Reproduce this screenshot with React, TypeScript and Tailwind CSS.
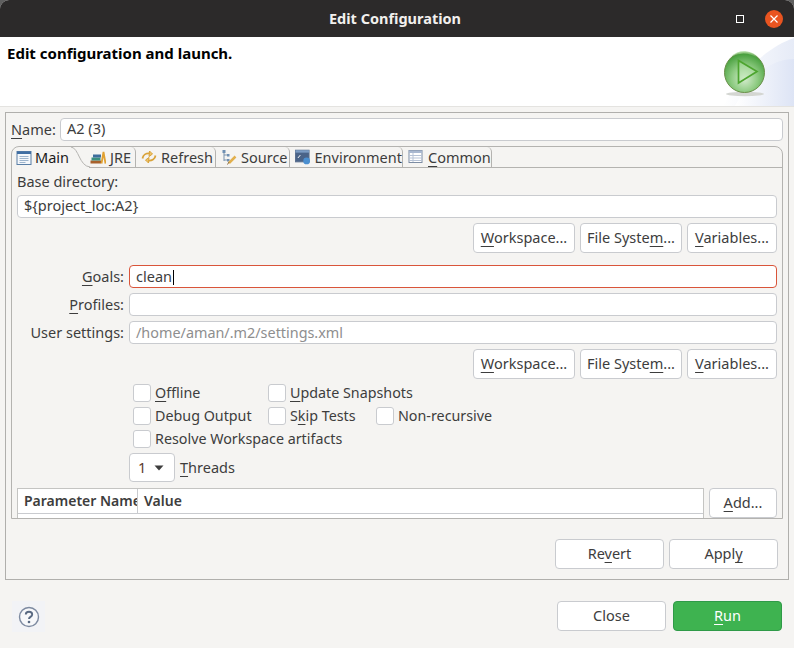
import React from "react";

const font = "font-['Noto_Sans','Open_Sans',sans-serif]";

function M({ children }: { children: React.ReactNode }) {
  return <u className="underline decoration-1 underline-offset-[3px]">{children}</u>;
}

function Btn({ w, children }: { w: string; children: React.ReactNode }) {
  return (
    <button className={`${w} h-[30px] shrink-0 rounded-[4px] border border-[#c9cbcf] bg-white pb-[2px] text-center text-[14.5px] leading-[24px] text-[#3d3d3d]`}>
      {children}
    </button>
  );
}

function BrowseRow() {
  return (
    <div className="flex justify-end gap-[5px]">
      <Btn w="w-[102px]"><M>W</M>orkspace...</Btn>
      <Btn w="w-[102px]">File Syste<M>m</M>...</Btn>
      <Btn w="w-[90px]"><M>V</M>ariables...</Btn>
    </div>
  );
}

function Input({ value, className = "", muted = false, caret = false }: { value: string; className?: string; muted?: boolean; caret?: boolean }) {
  return (
    <div className={`h-[23px] rounded-[4px] border border-[#c9cbcf] bg-white px-[6px] ${muted ? "text-[14.4px] text-[#8e8e8e]" : "text-[14.5px] text-[#3d3d3d]"} ${className}`}>
      {value}
      {caret && <span className="ml-px inline-block h-[15px] w-px translate-y-[3px] bg-black" />}
    </div>
  );
}

function Check({ label, w }: { label: React.ReactNode; w?: string }) {
  return (
    <div className={`flex h-[18px] items-center gap-[4px] ${w ?? ""}`}>
      <span className="h-[18px] w-[18px] shrink-0 rounded-[3px] border border-[#c9cbcf] bg-white" />
      <span className="whitespace-nowrap text-[14.3px] leading-[16px] text-[#3d3d3d]">{label}</span>
    </div>
  );
}

function IconMain() {
  return (
    <svg width="16" height="16" viewBox="0 0 16 16">
      <rect x="1" y="1.5" width="14" height="13" fill="#f4f7fb" stroke="#5a7fa6" />
      <rect x="1" y="1.5" width="14" height="2.5" fill="#3f6ea3" />
      <path d="M3.5 6.5h9M3.5 8.5h9M3.5 10.5h9M3.5 12.5h6" stroke="#9db4cc" />
    </svg>
  );
}

function IconJre() {
  return (
    <svg width="16" height="16" viewBox="0 0 16 16">
      <rect x="0.5" y="11.5" width="10.5" height="3" fill="#a8612c" />
      <rect x="1.5" y="8.5" width="9" height="3" fill="#3a8f7e" />
      <rect x="3" y="5.5" width="8" height="3" fill="#3d6d9c" />
      <path d="M11.5 14.5 L13.5 3 L15.5 14.5" fill="none" stroke="#e0a030" strokeWidth="1.8" />
    </svg>
  );
}

function IconRefresh() {
  return (
    <svg width="16" height="16" viewBox="0 0 16 16" fill="none" stroke="#d9a33a">
      <path d="M1.5 9.5 C2 6 5 4 9 4.5" strokeWidth="1.8" />
      <path d="M8.5 2 L11.5 5 L8 7.5 Z" fill="#eec36a" />
      <path d="M14.5 6.5 C14 10 11 12 7 11.5" strokeWidth="1.8" />
      <path d="M7.5 14 L4.5 11 L8 8.5 Z" fill="#eec36a" />
    </svg>
  );
}

function IconSource() {
  return (
    <svg width="16" height="16" viewBox="0 0 16 16" fill="none">
      <path d="M3 2v10M3 6h3M3 11h3" stroke="#7b93ad" />
      <rect x="1.5" y="1" width="3" height="3" fill="#6f8fb3" />
      <rect x="6" y="5" width="2.5" height="2.5" fill="#6f8fb3" />
      <rect x="6" y="10" width="2.5" height="2.5" fill="#6f8fb3" />
      <path d="M8 14 L14.5 7.5" stroke="#e2b04e" strokeWidth="2.5" />
      <path d="M6.5 15.5 L8 13" stroke="#8a6a3a" />
    </svg>
  );
}

function IconEnv() {
  return (
    <svg width="16" height="16" viewBox="0 0 16 16">
      <rect x="0.5" y="1" width="14" height="12" fill="#4a6388" stroke="#5a6f8e" />
      <rect x="0.5" y="1" width="14" height="2.5" fill="#7c9cc4" />
      <path d="M3 9 L5.5 6" stroke="#fff" />
      <circle cx="12" cy="12" r="3.5" fill="#4b8fd0" />
    </svg>
  );
}

function IconCommon() {
  return (
    <svg width="16" height="16" viewBox="0 0 16 16">
      <rect x="1" y="1.5" width="13" height="12" fill="#fff" stroke="#7d8ca3" />
      <rect x="1" y="1.5" width="13" height="2.5" fill="#a9b8d0" />
      <path d="M5 4v9M1 6.5h13M1 9h13M1 11.5h13" stroke="#b7c3d6" />
    </svg>
  );
}

function Tab({ w, icon, children }: { w: string; icon: React.ReactNode; children: React.ReactNode }) {
  return (
    <div className={`${w} flex h-full shrink-0 items-center gap-[4px] rounded-tr-[5px] border-r border-[#b4b3b0] text-[14.5px] text-[#3d3d3d]`}>
      {icon}
      <span className="whitespace-nowrap pt-[1px]">{children}</span>
    </div>
  );
}

function Banner() {
  return (
    <svg width="74" height="69" viewBox="0 0 74 69" className="shrink-0">
      <defs>
        <linearGradient id="bg" x1="0" y1="0" x2="1" y2="0">
          <stop offset="0" stopColor="#ffffff" />
          <stop offset="1" stopColor="#e6ebf7" />
        </linearGradient>
        <linearGradient id="bg2" x1="0" y1="0" x2="1" y2="0">
          <stop offset="0" stopColor="#ffffff" />
          <stop offset="1" stopColor="#dde4f5" />
        </linearGradient>
        <radialGradient id="ball" cx="0.5" cy="0.66" r="0.66">
          <stop offset="0" stopColor="#d6ecd0" />
          <stop offset="0.5" stopColor="#8ecb82" />
          <stop offset="1" stopColor="#3f9a35" />
        </radialGradient>
        <linearGradient id="shine" x1="0" y1="0" x2="0" y2="1">
          <stop offset="0" stopColor="#a8dc9a" />
          <stop offset="1" stopColor="#7cc070" stopOpacity="0" />
        </linearGradient>
      </defs>
      <path d="M74 1 C50 9 25 30 3 69 L74 69 Z" fill="url(#bg)" />
      <path d="M74 22 C50 22 30 40 15 69 L74 69 Z" fill="url(#bg2)" />
      <ellipse cx="25" cy="57" rx="19" ry="2.2" fill="#d4d6d2" />
      <circle cx="24.5" cy="35.5" r="20" fill="url(#ball)" stroke="#6b8f4a" strokeWidth="1" />
      <path d="M10 20 A20 20 0 0 1 40 22 Q25 12 10 20 Z" fill="url(#shine)" />
      <path d="M18.5 23.5 L37 34.5 L18.5 46 Z" fill="#c4e8ba" fillOpacity="0.45" stroke="#4da52f" strokeWidth="1.7" />
    </svg>
  );
}

export default function App() {
  return (
    <div className={`${font} h-[648px] w-[794px] overflow-hidden bg-[#5f5f5f]`}>
      <div className="flex h-[648px] flex-col overflow-hidden rounded-t-[9px] bg-[#f5f4f2]">
        {/* Title bar */}
        <div className="flex h-[37px] shrink-0 items-center bg-[#2c2a2a]">
          <div className="w-[736px] pl-[54px] text-center text-[14.5px] font-bold text-[#f2f0ee]">Edit Configuration</div>
          <span className="h-[8px] w-[8px] shrink-0 border border-white" />
          <span className="ml-[21px] flex h-[18px] w-[18px] shrink-0 items-center justify-center rounded-full bg-[#e95420]">
            <svg width="10" height="10" viewBox="0 0 10 10"><path d="M1.5 1.5 L8.5 8.5 M8.5 1.5 L1.5 8.5" stroke="#fff" strokeWidth="1.2" /></svg>
          </span>
        </div>

        {/* Header */}
        <div className="flex h-[70px] shrink-0 justify-between border-b border-[#e4e3e0] bg-white">
          <div className="pl-[7px] pt-[5px] text-[15px] font-bold leading-[22px] text-black">Edit configuration and launch.</div>
          <Banner />
        </div>

        {/* Main frame */}
        <div className="mx-[5px] mt-[5px] flex h-[468px] shrink-0 flex-col border border-[#b0afac] px-[5px] pt-[5px]">
          <div className="flex h-[23px] shrink-0 items-center gap-[5px]">
            <span className="w-[44px] shrink-0 whitespace-nowrap text-[14.5px] text-[#3d3d3d]"><M>N</M>ame:</span>
            <Input value="A2 (3)" className="flex-1 leading-[19px]" />
          </div>

          {/* Tab folder */}
          <div className="mt-[5px] flex h-[373px] shrink-0 flex-col overflow-hidden rounded-t-[8px] border border-[#b4b3b0]">
            <div className="flex h-[21px] shrink-0 border-b border-[#b4b3b0]">
              <div className="relative flex h-[21px] w-[78px] shrink-0 items-center gap-[3px] rounded-tl-[6px] pl-[4px] text-[14.5px] text-[#1a1a1a]">
                <IconMain />
                <span className="pt-[1px]">Main</span>
                <svg width="20" height="21" viewBox="0 0 20 21" className="absolute -right-px top-0">
                  <path d="M0 0 C8 1 8 19 19 20 L0 20 Z" fill="#f5f4f2" />
                  <path d="M0 0 C8 1 8 19 19 20" fill="none" stroke="#b4b3b0" />
                  <rect x="0" y="20" width="18" height="1" fill="#f5f4f2" />
                </svg>
                <span className="absolute left-0 top-[20px] h-px w-[60px] bg-[#f5f4f2]" />
              </div>
              <Tab w="w-[46px]" icon={<IconJre />}>JRE</Tab>
              <Tab w="w-[80px] pl-[5px]" icon={<IconRefresh />}>Refresh</Tab>
              <Tab w="w-[74px] pl-[5px]" icon={<IconSource />}>Source</Tab>
              <Tab w="w-[113px] pl-[5px]" icon={<IconEnv />}>Environment</Tab>
              <Tab w="w-[89px] pl-[5px]" icon={<IconCommon />}><M>C</M>ommon</Tab>
            </div>

            <div className="flex min-h-0 flex-1 flex-col px-[5px]">
              <div className="mt-[3px] h-[24px] text-[14.5px] leading-[20px] text-[#3d3d3d]">Base directory:</div>
              <Input value="${project_loc:A2}" className="leading-[19px]" />
              <div className="mt-[5px]"><BrowseRow /></div>

              <div className="mt-[12px] grid grid-cols-[107px_1fr] items-center gap-x-[5px] gap-y-[5px]">
                <span className="text-right text-[14.5px] text-[#3d3d3d]"><M>G</M>oals:</span>
                <Input value="clean" caret className="border-[#d9553a] leading-[21px]" />
                <span className="text-right text-[14.5px] text-[#3d3d3d]"><M>P</M>rofiles:</span>
                <Input value="" />
                <span className="text-right text-[14.5px] whitespace-nowrap text-[#3d3d3d]">User settings:</span>
                <Input value="/home/aman/.m2/settings.xml" muted className="leading-[21px]" />
              </div>
              <div className="mt-[5px]"><BrowseRow /></div>

              <div className="ml-[116px] mt-[5px] flex flex-col gap-[5px]">
                <div className="flex">
                  <Check w="w-[135px]" label={<><M>O</M>ffline</>} />
                  <Check label={<><M>U</M>pdate Snapshots</>} />
                </div>
                <div className="flex">
                  <Check w="w-[135px]" label="Debug Output" />
                  <Check w="w-[108px]" label={<>S<M>k</M>ip Tests</>} />
                  <Check label="Non-recursive" />
                </div>
                <Check label="Resolve Workspace artifacts" />
              </div>

              <div className="ml-[112px] mt-[5px] flex h-[29px] shrink-0 items-center gap-[5px]">
                <div className="flex h-[29px] w-[46px] items-center justify-between rounded-[4px] border border-[#c9cbcf] bg-white pl-[8px] pr-[10px] text-[14.5px] text-[#5c3a2a]">
                  <span>1</span>
                  <svg width="10" height="6" viewBox="0 0 10 6"><path d="M0.5 0.5 L9.5 0.5 L5 5.5 Z" fill="#3d3d3d" /></svg>
                </div>
                <span className="text-[14.5px] text-[#3d3d3d]"><M>T</M>hreads</span>
              </div>

              <div className="mt-[6px] flex min-h-0 flex-1 gap-[5px]">
                <div className="flex w-[687px] flex-col border-x border-t border-[#c4c4c2] bg-white">
                  <div className="flex h-[25px] shrink-0 border-b border-[#c9cbcf] text-[14px] font-semibold leading-[23px] text-[#3d3d3d]">
                    <div className="w-[120px] shrink-0 overflow-hidden whitespace-nowrap border-r border-[#c9cbcf] pl-[6px]">Parameter Name</div>
                    <div className="pl-[6px]">Value</div>
                  </div>
                </div>
                <Btn w="w-[68px]"><M>A</M>dd...</Btn>
              </div>
            </div>
          </div>

          <div className="mt-[20px] flex justify-end gap-[5px] pr-[5px]">
            <Btn w="w-[109px]">Re<M>v</M>ert</Btn>
            <Btn w="w-[109px]">Appl<M>y</M></Btn>
          </div>
        </div>

        {/* Footer */}
        <div className="mt-[21px] flex h-[31px] shrink-0 items-start pl-[12px] pr-[12px]">
          <div className="flex h-[31px] w-[33px] shrink-0 items-center justify-center bg-[#f2f3f6]">
            <svg width="22" height="22" viewBox="0 0 22 22">
              <circle cx="11" cy="11" r="9.5" fill="#f7f8fa" stroke="#7d8aa0" strokeWidth="1.4" />
              <path d="M7.8 8.5 C7.8 4.8 14.2 4.8 14.2 8.5 C14.2 11 11 10.8 11 13" fill="none" stroke="#5a6a82" strokeWidth="1.9" />
              <circle cx="11" cy="16" r="1.3" fill="#5a6a82" />
            </svg>
          </div>
          <div className="flex-1" />
          <Btn w="w-[109px]">Close</Btn>
          <button className="ml-[7px] h-[30px] w-[109px] shrink-0 rounded-[4px] border border-[#2f9a48] bg-[#3eb350] text-center text-[14.5px] text-white"><M>R</M>un</button>
        </div>
      </div>
    </div>
  );
}
